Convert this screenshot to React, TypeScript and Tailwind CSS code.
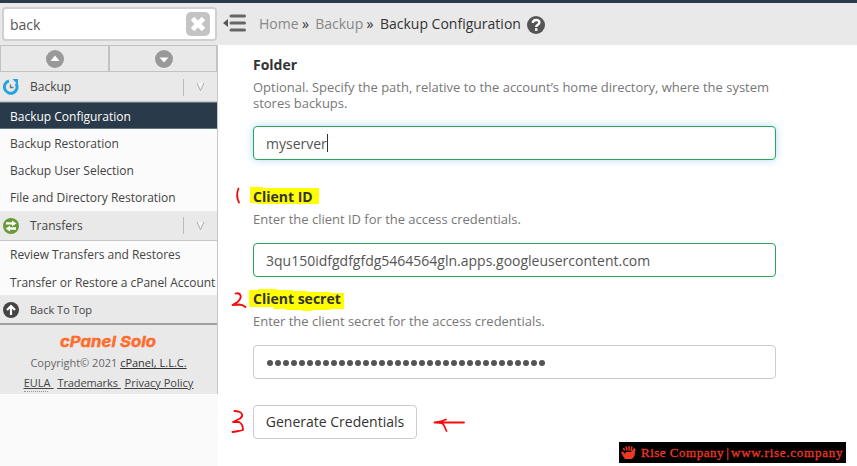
import { ReactNode } from 'react';

interface IFieldProps {
	label: ReactNode;
	description: string;
	children: ReactNode;
}

const links = {
	backup: [
		'Backup Configuration',
		'Backup Restoration',
		'Backup User Selection',
		'File and Directory Restoration',
	],
	transfers: ['Review Transfers and Restores', 'Transfer or Restore a cPanel Account'],
};

const SearchBox = () => (
	<div className="h-[42px] pl-[2px] pt-1">
		<div className="flex h-[34px] w-[215px] items-center justify-between rounded-[4px] border-2 border-[#d0d0d0] bg-white pl-[6px] pr-[5px]">
			<span className="text-[14px] text-[#555]">back</span>
			<svg width="24" height="24" viewBox="0 0 24 24">
				<rect width="24" height="24" rx="5" fill="#c4c4c4" />
				<path d="M6.500 6.500l11 11M17.500 6.500l-11 11" stroke="#fff" strokeWidth="4.800" />
			</svg>
		</div>
	</div>
);

const ScrollButton = ({ up }: { up?: boolean }) => (
	<div className="flex flex-1 items-center justify-center border border-[#c2c2c2] pl-[2px]">
		<svg width="18" height="18" viewBox="0 0 18 18">
			<circle cx="9" cy="9" r="9" fill="#999" />
			<path d={up ? 'M4.500 11L9 5.500l4.500 5.500z' : 'M4.500 7.500L9 12.500l4.500-5z'} fill="#fff" />
		</svg>
	</div>
);

const GroupHeading = ({ icon, title }: { icon: ReactNode; title: string }) => (
	<div className="flex items-center border-b border-[#c6c6c6] bg-[#e9e9e9] pl-[3px]">
		{icon}
		<span className="ml-[11px] flex-1">{title}</span>
		<span className="mr-[12px] h-[17px] w-px bg-[#bbb]" />
		<svg className="mr-[12px]" width="9" height="10" viewBox="0 0 9 10">
			<path d="M0.500 1h8L4.500 9z" fill="#f7f7f7" />
			<path d="M1 1l3.500 7.500L8 1" fill="none" stroke="#aaa" />
		</svg>
	</div>
);

const BackupIcon = () => (
	<svg width="16" height="16" viewBox="0 0 16 16" fill="none">
		<path d="M6 1.900A6.300 6.300 0 1 0 13 4.500" stroke="#22a5df" strokeWidth="3" />
		<path d="M9.500 0H15v6z" fill="#22a5df" />
		<path d="M7.500 5.500v3H10.500" stroke="#777" strokeWidth="1.400" />
	</svg>
);

const TransfersIcon = () => (
	<svg width="16" height="16" viewBox="0 0 16 16">
		<circle cx="8" cy="8" r="8" fill="#689b37" />
		<path d="M3 4.200h6V2.500l4.500 3L9 8.200V6.500H3zM13 9.300H7V7.800L2.500 10.600 7 13.500v-1.700h6z" fill="#fff" />
	</svg>
);

const Sidebar = () => (
	<aside className="h-[391px] w-[218px] shrink-0 bg-[#e9e9e9] text-[12px] text-[#444]">
		<SearchBox />
		<div className="h-[349px] border-r border-[#c6c6c6]">
			<div className="flex h-[27px]">
				<ScrollButton up />
				<ScrollButton />
			</div>
			<div className="grid h-[30px] pt-px">
				<GroupHeading title="Backup" icon={<BackupIcon />} />
			</div>
			<ul className="h-[109px] bg-[#fbfbfb]">
				{links.backup.map((link, index) => (
					<li
						key={link}
						className={
							index === 0
								? 'h-[27px] border-y border-[#60777b] bg-[#293a4a] pl-[10px] leading-[27px] text-white'
								: 'h-[27px] pl-[10px] leading-[30px] tracking-[-0.015px]'
						}
					>
						{link}
					</li>
				))}
			</ul>
			<div className="grid h-[30px]">
				<GroupHeading title="Transfers" icon={<TransfersIcon />} />
			</div>
			<ul className="h-[54px] bg-[#fbfbfb]">
				{links.transfers.map((link) => (
					<li
						key={link}
						className="h-[28px] whitespace-nowrap pl-[10px] leading-[28px] tracking-[-0.03px]"
					>
						{link}
					</li>
				))}
			</ul>
			<div className="flex h-[30px] items-center border-b-2 border-[#a0a0a0] pl-[3px] pt-px">
				<svg width="16" height="16" viewBox="0 0 16 16">
					<circle cx="8" cy="8" r="8" fill="#444" />
					<path d="M8 13V4M4 8l4-4 4 4" fill="none" stroke="#fff" strokeWidth="2.200" />
				</svg>
				<span className="ml-[11px] pt-px text-[11px]">Back To Top</span>
			</div>
			<footer className="flex h-[69px] flex-col items-center pt-[6px] text-[11px]">
				<svg className="overflow-visible" width="98" height="20" viewBox="0 0 98 20">
					<text
						x="0"
						y="16"
						textLength="96"
						lengthAdjust="spacingAndGlyphs"
						className="fill-[#ff6c2c] stroke-[#ff6c2c] stroke-[0.4] font-['Inter',sans-serif] text-[15px] font-bold italic"
					>
						cPanel Solo
					</text>
				</svg>
				<p className="mt-[3px] leading-[18px] text-[#666]">
					Copyright© 2021 <a className="text-[#333] underline">cPanel, L.L.C.</a>
				</p>
				<p className="mt-[2px] flex whitespace-pre leading-[18px] underline">
					<a className="relative">
						EULA{' '}
						<span className="absolute bottom-0 left-0 w-[24px] border-b border-dotted border-[#999]" />
					</a>
					<a className="ml-[4px] tracking-[-0.1px]">Trademarks </a>
					<a className="ml-[4px]">Privacy Policy</a>
				</p>
			</footer>
		</div>
	</aside>
);

const Breadcrumbs = () => (
	<header className="flex h-[42px] items-center bg-[#e9e9e9] pl-[5px] text-[14px] text-[#333]">
		<svg className="-mt-[3px]" width="23" height="18" viewBox="0 0 23 18" fill="#555">
			<path d="M0 9l5-4v8z" />
			<path d="M8 2h13.500M8 9h13.500M8 16h13.500" stroke="#666" strokeWidth="3" strokeLinecap="round" />
		</svg>
		<nav className="-mt-px ml-[13px] flex whitespace-pre">
			<span className="text-[#888]">Home</span>
			<span className="tracking-[-0.3px]"> »  </span>
			<span className="text-[#888]">Backup</span>
			<span className="tracking-[-0.3px]"> »  </span>
			<span>Backup Configuration</span>
		</nav>
		<svg className="ml-[6px] mt-[2px]" width="18" height="18" viewBox="0 0 18 18">
			<circle cx="9" cy="9" r="9" fill="#555" />
			<path d="M5.800 7c0-4 6.600-4 6.600-.4C12.400 9 9.200 8.600 9.200 11" fill="none" stroke="#fff" strokeWidth="2.400" />
			<rect x="8" y="12.300" width="2.500" height="2.500" fill="#fff" />
		</svg>
	</header>
);

const Field = ({ label, description, children }: IFieldProps) => (
	<div className="w-[523px]">
		<div className="text-[14px] font-bold leading-[20px] text-[#333]">{label}</div>
		<p className="mt-[4px] text-[13px] leading-[16px] tracking-[-0.015px] text-[#777]">
			{description}
		</p>
		{children}
	</div>
);

// Pen strokes drawn over the form
const Annotations = () => (
	<svg
		className="pointer-events-none absolute left-0 top-0"
		width="857"
		height="466"
		viewBox="0 0 857 466"
		fill="none"
		stroke="#f50a0a"
		strokeWidth="1.800"
		strokeLinecap="round"
		strokeLinejoin="round"
	>
		<path d="M238.500 188.500q-3 7 .500 14" />
		<path d="M235.500 293.500q4-1 5 2t-3 6.500l-5 3 6.500-.5q3.500 0 6.500 2.500" />
		<path d="M234.500 411l4 .5q4.500 1.500 3.500 5l-2 2-7 3.500h6q4 2 4 8l-4 1-6.500 1" />
		<path d="M464 422.500h-29.500q6-.5 11.500-3M436 422.500l6 .500 2 2.500 2.500 5.500" />
	</svg>
);

const Watermark = () => (
	<div className="absolute left-[619px] top-[442px] flex h-[21px] w-[227px] items-center bg-black pl-[2px]">
		<svg className="shrink-0" width="15" height="15" viewBox="0 0 15 15" fill="#ed3823">
			<path d="M0 7l2-.5L4 9l1-2h5l3-4 1.500 1-1 7-2.500 3H4l-2-3z" />
			<path d="M2.500 3l1 2.500M5 1.500l1 4M8 1v4.500M11 1.500L10 6" stroke="#ed3823" strokeWidth="1.500" />
		</svg>
		<div className="ml-[5px] flex shrink-0 items-center whitespace-nowrap font-['Liberation_Serif',serif] text-[13px] leading-[20px] text-[#ed3823] [-webkit-text-stroke:0.3px_#ed3823]">
			<span className="w-[83px] tracking-[0.5px]">Rise Company</span>
			<span className="w-[7px] text-center">|</span>
			<span className="tracking-[0.75px]">www.rise.company</span>
		</div>
	</div>
);

const App = () => {
	return (
		<div className="relative h-[466px] w-[857px] overflow-hidden bg-white font-['Open_Sans',sans-serif]">
			<div className="h-[3px] bg-[#293a4a]" />
			<div className="flex h-[463px] bg-[#fafafa]">
				<Sidebar />
				<main className="flex-1 bg-white">
					<Breadcrumbs />
					<div className="pl-[35px] pt-[10px]">
						<Field
							label="Folder"
							description="Optional. Specify the path, relative to the account’s home directory, where the system stores backups."
						>
							<div className="mt-[15px] flex h-[34px] items-center rounded-[4px] border border-[#26a65b] px-3 text-[14px] text-[#555] shadow-[0_0_8px_#b8d8f5]">
								myserver
								<span className="h-[18px] w-px bg-[#333]" />
							</div>
						</Field>
						<div className="mt-[27px]">
							<Field
								label={
									<span className="relative isolate">
										<svg className="absolute left-[-3px] top-[0px] -z-10" width="70" height="20">
											<path d="M0 0h13v1h56v16H7v-1H0z" fill="#ff0" />
										</svg>
										Client ID
									</span>
								}
								description="Enter the client ID for the access credentials."
							>
								<div className="mt-[16px] flex h-[34px] items-center rounded-[4px] border border-[#26a65b] px-3 text-[14px] text-[#555]">
									3qu150idfgdfgfdg5464564gln.apps.googleusercontent.com
								</div>
							</Field>
						</div>
						<div className="mt-[12px]">
							<Field
								label={
									<span className="relative isolate">
										<svg className="absolute left-[-4px] top-[-1px] -z-10" width="96" height="26">
											<path d="M0 2h9V1h19v1h16v1h14v1h23v1h14v16H81v1H63v1H53v-1H37v-1H24v-2H0z" fill="#ff0" />
										</svg>
										Client secret
									</span>
								}
								description="Enter the client secret for the access credentials."
							>
								<div className="mt-[16px] flex h-[34px] items-center gap-[2px] rounded-[4px] border border-[#ccc] px-[13px] pt-[2px]">
									{Array.from({ length: 35 }, (_, index) => (
										<span key={index} className="size-[6px] rounded-full bg-[#555]" />
									))}
								</div>
							</Field>
						</div>
						<button className="mt-[26px] h-[34px] w-[164px] rounded-[4px] border border-[#ccc] pb-px text-[14px] text-[#333]">
							Generate Credentials
						</button>
					</div>
				</main>
			</div>
			<Annotations />
			<Watermark />
		</div>
	);
};

export default App;
